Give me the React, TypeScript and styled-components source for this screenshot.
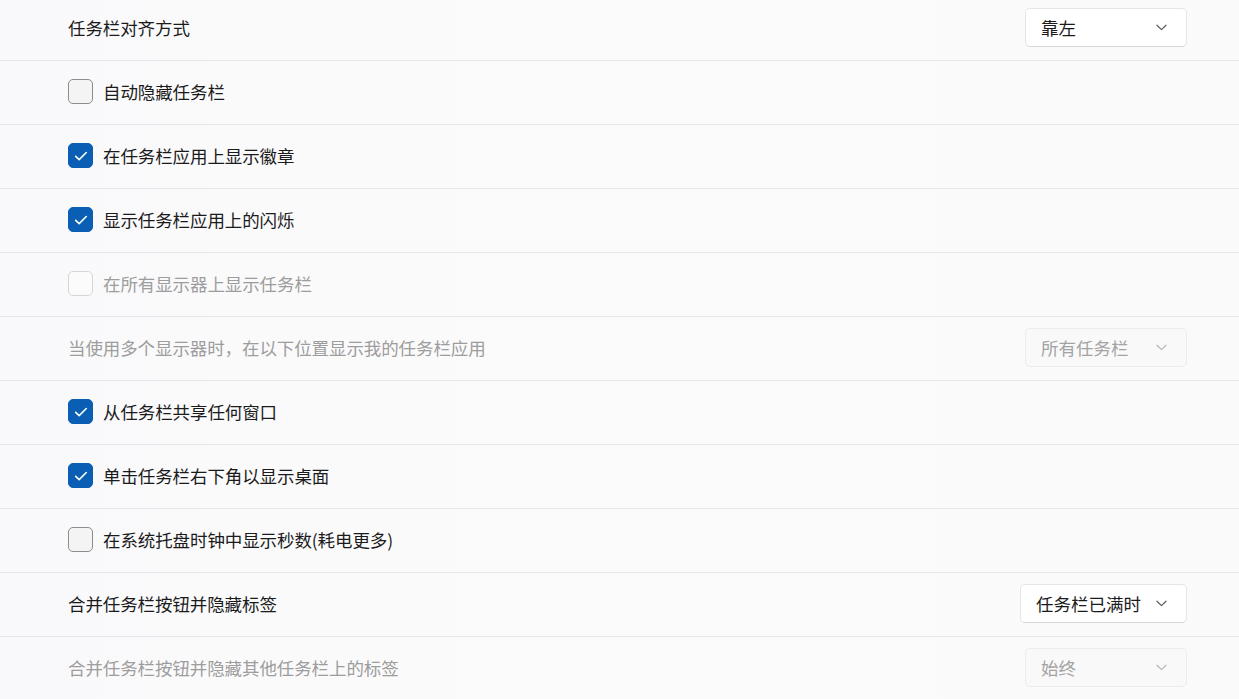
import * as React from 'react';
import styled, { createGlobalStyle } from 'styled-components';

const GlobalStyle = createGlobalStyle`
  html, body {
    margin: 0;
    padding: 0;
    background: #fbfbfc;
    overflow: hidden;
  }
  body {
    font-family: "Noto Sans CJK SC", "Noto Sans", sans-serif;
  }
`;

const Page = styled.div`
  width: 1239px;
  height: 699px;
  overflow: hidden;
  background: linear-gradient(90deg, #f9f9fb 0%, #fcfbfb 50%, #fafafb 100%);
`;

const List = styled.div`
  display: flex;
  flex-direction: column;
  margin-top: -3px;
`;

const Row = styled.div`
  height: 63px;
  box-sizing: content-box;
  display: flex;
  align-items: center;
  justify-content: space-between;
  padding: 0 52px 0 68px;
  border-bottom: 1px solid #e6e6e8;
  flex-shrink: 0;
  & > * {
    margin-bottom: 2px;
  }
`;

const Label = styled.span<{ $disabled?: boolean }>`
  font-size: 17.5px;
  line-height: 24px;
  color: ${(p) => (p.$disabled ? '#9d9d9d' : '#1b1b1b')};
  letter-spacing: -0.1px;
`;

const CheckLabel = styled.label`
  display: flex;
  align-items: center;
  gap: 10px;
`;

const Box = styled.span<{ $checked?: boolean; $disabled?: boolean }>`
  width: 25px;
  height: 25px;
  box-sizing: border-box;
  border-radius: 5px;
  display: flex;
  align-items: center;
  justify-content: center;
  background: ${(p) => (p.$checked ? '#0a5fb4' : p.$disabled ? '#fbfbfb' : '#f4f4f5')};
  border: 1px solid
    ${(p) => (p.$checked ? '#0a5fb4' : p.$disabled ? '#d6d6d6' : '#8c8c8c')};
`;

const Select = styled.div<{ $disabled?: boolean }>`
  min-width: 162px;
  height: 39px;
  box-sizing: border-box;
  display: flex;
  align-items: center;
  justify-content: space-between;
  gap: 15px;
  padding: 0 19px 0 15px;
  border-radius: 5px;
  background: ${(p) => (p.$disabled ? '#f9f9fa' : '#ffffff')};
  border: 1px solid ${(p) => (p.$disabled ? '#ececec' : '#e6e6e6')};
  border-bottom-color: ${(p) => (p.$disabled ? '#ececec' : '#d6d6d6')};
  color: ${(p) => (p.$disabled ? '#a3a3a3' : '#1b1b1b')};
  font-size: 17.5px;
`;

const Chevron = ({ color }: { color: string }) => (
  <svg width="11" height="7" viewBox="0 0 11 7" fill="none">
    <path d="M1 1.2 L5.5 5.6 L10 1.2" stroke={color} strokeWidth="1.2" strokeLinecap="round" strokeLinejoin="round" />
  </svg>
);

const Check = () => (
  <svg width="18" height="18" viewBox="0 0 16 16" fill="none">
    <path d="M3.3 8.3 L6.4 11.2 L12.7 4.9" stroke="#ffffff" strokeWidth="1.4" strokeLinecap="round" strokeLinejoin="round" />
  </svg>
);

type Item =
  | { kind: 'check'; text: string; checked?: boolean; disabled?: boolean }
  | { kind: 'select'; text: string; value: string; disabled?: boolean };

const items: Item[] = [
  { kind: 'select', text: '任务栏对齐方式', value: '靠左' },
  { kind: 'check', text: '自动隐藏任务栏' },
  { kind: 'check', text: '在任务栏应用上显示徽章', checked: true },
  { kind: 'check', text: '显示任务栏应用上的闪烁', checked: true },
  { kind: 'check', text: '在所有显示器上显示任务栏', disabled: true },
  { kind: 'select', text: '当使用多个显示器时，在以下位置显示我的任务栏应用', value: '所有任务栏', disabled: true },
  { kind: 'check', text: '从任务栏共享任何窗口', checked: true },
  { kind: 'check', text: '单击任务栏右下角以显示桌面', checked: true },
  { kind: 'check', text: '在系统托盘时钟中显示秒数(耗电更多)' },
  { kind: 'select', text: '合并任务栏按钮并隐藏标签', value: '任务栏已满时' },
  { kind: 'select', text: '合并任务栏按钮并隐藏其他任务栏上的标签', value: '始终', disabled: true },
];

export default function App() {
  return (
    <Page>
      <GlobalStyle />
      <List>
        {items.map((item) =>
          item.kind === 'check' ? (
            <Row key={item.text}>
              <CheckLabel>
                <Box $checked={item.checked} $disabled={item.disabled}>
                  {item.checked && <Check />}
                </Box>
                <Label $disabled={item.disabled}>{item.text}</Label>
              </CheckLabel>
            </Row>
          ) : (
            <Row key={item.text}>
              <Label $disabled={item.disabled}>{item.text}</Label>
              <Select $disabled={item.disabled}>
                <span>{item.value}</span>
                <Chevron color={item.disabled ? '#b5b5b5' : '#5c5c5c'} />
              </Select>
            </Row>
          )
        )}
      </List>
    </Page>
  );
}
